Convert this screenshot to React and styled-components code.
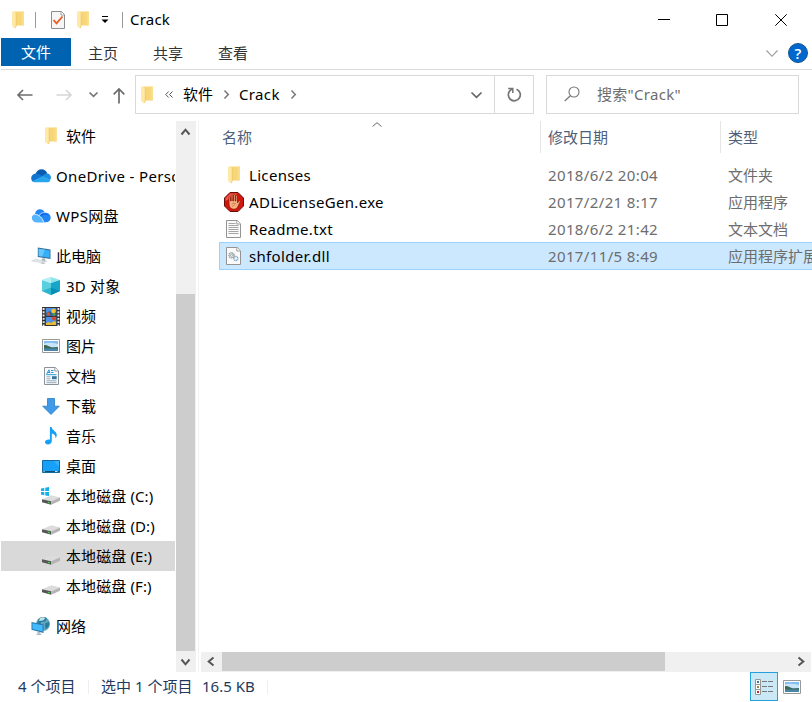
import React from "react";
import styled, { createGlobalStyle } from "styled-components";

const Global = createGlobalStyle`
  * { box-sizing: border-box; }
  html, body { margin: 0; background: #fff; overflow: hidden; }
`;

const Window = styled.div`
  width: 812px;
  height: 702px;
  display: flex;
  flex-direction: column;
  background: #fff;
  color: #000;
  font: 15px/20px "Noto Sans", "Noto Sans CJK SC", sans-serif;
  white-space: nowrap;
  overflow: hidden;
`;

const Svg = styled.svg`
  display: block;
  flex: none;
  overflow: visible;
`;

const Text = styled.span`
  letter-spacing: ${(p) => p.$ls || 0}px;
`;

/* ---------- title bar ---------- */
const TitleBar = styled.header`
  height: 38px;
  flex: none;
  display: flex;
  align-items: center;
  padding: 1px 25px 0 12px;
`;
const Title = styled.span`
  letter-spacing: 0.2px;
  margin-top: -2px;
`;
const TitleSeparator = styled.i`
  width: 1px;
  height: 16px;
  background: #999;
  margin: 0 ${(p) => p.$right}px 0 ${(p) => p.$left}px;
`;
const WindowControls = styled.div`
  display: flex;
  margin-left: auto;
`;
const WindowButton = styled.div`
  margin-left: ${(p) => p.$before}px;
`;
const QuickItem = styled.div`
  margin-right: ${(p) => p.$after}px;
`;

/* ---------- ribbon ---------- */
const Ribbon = styled.nav`
  height: 32px;
  flex: none;
  display: flex;
  align-items: flex-start;
  margin-left: 1px;
  padding-right: 4px;
  border-bottom: 1px solid #dadbdc;
`;
const FileTab = styled.div`
  width: 70px;
  height: 28px;
  background: #0063b1;
  color: #fff;
  text-align: center;
  line-height: 29px;
`;
const Tab = styled.div`
  width: 65px;
  line-height: 30px;
  text-align: center;
  color: #333;
  text-indent: -1px;
`;
const RibbonEnd = styled.div`
  display: flex;
  align-items: center;
  gap: 10px;
  height: 30px;
  margin-left: auto;
`;

/* ---------- address row ---------- */
const AddressRow = styled.div`
  height: 51px;
  flex: none;
  display: flex;
  padding: 5px 13px 0 17px;
`;
const NavButtons = styled.div`
  width: 118px;
  height: 39px;
  display: flex;
  align-items: center;
`;
const NavButton = styled.div`
  margin-right: ${(p) => p.$after}px;
`;
const AddressBox = styled.div`
  width: 399px;
  height: 39px;
  border: 1px solid #d9d9d9;
  display: flex;
  align-items: center;
  padding-left: 5px;
`;
const CrumbOverflow = styled.div`
  margin: 0 0 0 12px;
`;
const Crumb = styled.span`
  margin: 0 11px 0 10px;
  line-height: 36px;
  height: 37px;
  letter-spacing: ${(p) => p.$ls || 0}px;
`;
const AddressDrop = styled.div`
  margin: 0 12px 0 auto;
`;
const Refresh = styled.div`
  width: 39px;
  height: 37px;
  border-left: 1px solid #d9d9d9;
  display: flex;
  align-items: center;
  justify-content: center;
`;
const SearchBox = styled.div`
  width: 253px;
  height: 39px;
  margin-left: 12px;
  border: 1px solid #d9d9d9;
  display: flex;
  align-items: center;
  gap: 17px;
  padding: 0 0 2px 17px;
  color: #6d6d6d;
`;

/* ---------- body ---------- */
const Body = styled.div`
  height: 551px;
  flex: none;
  display: flex;
`;
const Sidebar = styled.aside`
  width: 176px;
  padding: 0 1px 0 1px;
`;
const TreeRow = styled.div`
  height: 30px;
  display: flex;
  align-items: center;
  overflow: hidden;
  margin-top: ${(p) => p.$gap || 0}px;
  padding-left: ${(p) => (p.$level === 2 ? 40 : 30)}px;
  background: ${(p) => (p.$selected ? "#d9d9d9" : "transparent")};
`;
const TreeIcon = styled.span`
  width: 20px;
  flex: none;
  display: flex;
  justify-content: center;
  margin-right: 5px;
`;
const VScroll = styled.div`
  width: 20px;
  display: flex;
  flex-direction: column;
  background: #f0f0f0;
`;
const ScrollButton = styled.div`
  width: ${(p) => p.$w}px;
  height: ${(p) => p.$h}px;
  flex: none;
  display: flex;
  align-items: center;
  justify-content: center;
`;
const VThumb = styled.div`
  width: 19px;
  height: 357px;
  margin-top: 152px;
  background: #cdcdcd;
`;
const Splitter = styled.div`
  width: 5px;
  border-left: 1px solid #f2f2f2;
  margin-left: 2px;
  margin-right: -2px;
`;
const Main = styled.main`
  flex: 1;
  min-width: 0;
  display: flex;
  flex-direction: column;
`;
const HeaderRow = styled.div`
  height: 32px;
  display: grid;
  grid-template-columns: 339px 180px 1fr;
  color: #4c607a;
`;
const HeaderCell = styled.div`
  position: relative;
  padding: 6px 0 0 ${(p) => (p.$first ? 21 : 7)}px;
  border-left: ${(p) => (p.$first ? 0 : 1)}px solid #e5e5e5;
`;
const SortMark = styled.span`
  position: absolute;
  left: 171px;
  top: 1px;
`;
const FileList = styled.div`
  flex: 1;
  padding: 8px 0 0 18px;
  overflow: hidden;
`;
const FileRow = styled.div`
  height: ${(p) => (p.$selected ? 28 : 27)}px;
  display: grid;
  grid-template-columns: 321px 180px 1fr;
  align-items: center;
  color: #6d6d6d;
  background: ${(p) => (p.$selected ? "#cce8ff" : "transparent")};
  border: 1px solid ${(p) => (p.$selected ? "#99d1ff" : "transparent")};
  border-right: 0;
`;
const FileName = styled.div`
  display: flex;
  align-items: center;
  color: #000;
  padding-left: 4px;
`;
const FileIcon = styled.span`
  width: 20px;
  display: flex;
  justify-content: center;
  margin-right: 5px;
`;
const Cell = styled.div`
  padding-left: 7px;
  overflow: hidden;
  letter-spacing: ${(p) => p.$ls || 0}px;
`;
const HScroll = styled.div`
  height: 20px;
  display: flex;
  align-items: stretch;
  background: #f0f0f0;
  margin: 0 1px 0 0;
`;
const HThumb = styled.div`
  width: 443px;
  height: 19px;
  background: #cdcdcd;
  margin-right: auto;
`;

/* ---------- status bar ---------- */
const StatusBar = styled.footer`
  height: 29px;
  flex: none;
  display: flex;
  align-items: center;
  padding: 0 11px 0 18px;
  color: #1e395b;
`;
const StatusItem = styled.span`
  width: ${(p) => p.$w}px;
  padding-bottom: 2px;
`;
const StatusLine = styled.i`
  width: 1px;
  height: 14px;
  background: #eee;
  margin-right: 12px;
`;
const ViewButtons = styled.div`
  margin-left: auto;
  display: flex;
  align-items: center;
  gap: 5px;
`;
const ViewToggle = styled.div`
  width: 28px;
  height: 29px;
  border: 1px solid #26a0da;
  background: #cbe8f6;
  display: flex;
  align-items: center;
  justify-content: center;
`;

/* ---------- icons ---------- */
const Folder = () => (
  <Svg width="12" height="18" viewBox="0 0 12 18">
    <path d="M2 .5h9.5v14H2z" fill="#f7d67a" />
    <path d="M9.5.5h2.3v14H9.5z" fill="#fbdc86" />
    <path d="M0 .5h2L4 2.5v13l-1 2L0 15z" fill="#ffe9a6" />
    <path d="M4.2 2.8v12.4l-1 2" stroke="#edc45f" strokeWidth=".7" fill="none" />
  </Svg>
);

const Chevron = ({ dir = "down", w = 10, h = 6, color = "#666", sw = 1.5 }) => {
  const d = {
    down: `M.5 .5L${w / 2} ${h - 0.7}L${w - 0.5} .5`,
    up: `M.5 ${h - 0.5}L${w / 2} .7L${w - 0.5} ${h - 0.5}`,
    right: `M.5 .5L${w - 0.7} ${h / 2}L.5 ${h - 0.5}`,
    left: `M${w - 0.5} .5L.7 ${h / 2}L${w - 0.5} ${h - 0.5}`,
  }[dir];
  return (
    <Svg width={w} height={h} viewBox={`0 0 ${w} ${h}`}>
      <path d={d} stroke={color} strokeWidth={sw} fill="none" />
    </Svg>
  );
};

const PropertiesIcon = () => (
  <Svg width="14" height="18" viewBox="0 0 14 18">
    <path d="M.5.5h10l3 3v14H.5z" fill="#f6f6f6" stroke="#8d8d8d" />
    <path d="M10 .5V4h3.5" fill="#fff" stroke="#8d8d8d" strokeWidth=".8" />
    <path d="M2.5 9l3 3.3L11.5 5.5" fill="none" stroke="#ec5a1c" strokeWidth="1.8" />
  </Svg>
);

const QuickMenu = () => (
  <Svg width="8" height="7" viewBox="0 0 8 7">
    <path d="M1 .5h6" stroke="#000" />
    <path d="M.5 3.5h7L4 7z" fill="#000" />
  </Svg>
);

const Minimize = () => (
  <Svg width="12" height="12" viewBox="0 0 12 12"><path d="M0 5.5h12" stroke="#000" /></Svg>
);
const Maximize = () => (
  <Svg width="12" height="12" viewBox="0 0 12 12"><path d="M.5.5h11v11H.5z" stroke="#000" fill="none" /></Svg>
);
const Close = () => (
  <Svg width="12" height="12" viewBox="0 0 12 12"><path d="M.3.3l11.4 11.4M11.7.3L.3 11.7" stroke="#000" /></Svg>
);

const HelpBadge = styled.div`
  width: 20px;
  height: 20px;
  border-radius: 50%;
  background: #0068cc;
  border: 1px solid #17568f;
  color: #fff;
  text-align: center;
  font: 600 15px/18px "Open Sans", sans-serif;
`;

const Arrow = ({ dir, color }) => (
  <Svg width="16" height="12" viewBox="0 0 16 12">
    <path
      d={dir === "left" ? "M15.5 6H1M6 1L1 6l5 5" : "M.5 6H15M10 1l5 5-5 5"}
      stroke={color}
      strokeWidth="1.6"
      fill="none"
    />
  </Svg>
);
const UpArrow = () => (
  <Svg width="12" height="16" viewBox="0 0 12 16">
    <path d="M6 16.5V2M.7 7.3L6 2l5.3 5.3" stroke="#6c6c6c" strokeWidth="1.7" fill="none" />
  </Svg>
);
const DoubleLeft = () => (
  <Svg width="8" height="7" viewBox="0 0 8 7">
    <path d="M3.7.5l-3 3 3 3M7.5.5l-3 3 3 3" stroke="#555" strokeWidth="1" fill="none" />
  </Svg>
);
const RefreshIcon = () => (
  <Svg width="14" height="15" viewBox="0 0 14 15">
    <path d="M9.5 2.2A6 6 0 1 1 3.2 3.4L5.2 1.8" stroke="#757575" strokeWidth="1.7" fill="none" />
    <path d="M1.2 1.5H5.8V6" stroke="#757575" strokeWidth="1.5" fill="none" />
  </Svg>
);
const SearchIcon = () => (
  <Svg width="16" height="16" viewBox="0 0 16 16">
    <circle cx="10" cy="6" r="5" stroke="#767676" strokeWidth="1.1" fill="none" />
    <path d="M6.4 9.7L.7 15" stroke="#767676" strokeWidth="1.2" />
  </Svg>
);

const OneDrive = () => (
  <Svg width="20" height="14" viewBox="0 0 20 14">
    <path d="M4.5 5C5.5 2 7.8.3 10.5.3c2.8 0 5 1.6 5.8 4.3L11 9z" fill="#0a5cb0" />
    <path d="M4.8 4.4C7 4.2 9 5.5 12 7.4L3 13.1C-1 12-1 5 4.8 4.4z" fill="#1174cf" />
    <path d="M15 4.6c3.2-.3 5 1.8 5 4.3l-1 2-8-4z" fill="#1b8fe0" />
    <path d="M1.5 12L11.7 7.1l7.8 3.9c-.6 1.4-1.7 2.3-3.5 2.3H4.5c-1.3 0-2.3-.5-3-1.3z" fill="#29a5ec" />
  </Svg>
);
const WpsCloud = () => (
  <Svg width="19" height="14" viewBox="0 0 19 14">
    <path d="M3 5C3.5 2 5.3.3 8 .3c2.4 0 4.3 1.5 4.8 3.6 3.5-.4 5.9 2 5.9 4.8 0 2.6-2 4.6-4.8 4.6H4.8C2 13.3.2 11.3.2 8.9.2 7 1.2 5.6 3 5z" fill="#2386f5" />
    <path d="M3 5.2c3.8-.4 6.6 1.5 9.5 8.1H4.8C2 13.3.2 11.3.2 8.9.2 7 1.2 5.6 3 5.2z" fill="#55b5ff" />
    <path d="M1 5.7c4.2-1 8.2 1.2 10.7 7.4M7.5 6.1c1-1.8 2.8-2.5 5.2-2.2" fill="none" stroke="#d9efff" strokeWidth=".9" />
    <path d="M8 6.3c2-3 6.8-2.6 9 .2-2.5-1.2-5.6-1-8 .8z" fill="#1267e8" />
  </Svg>
);
const ThisPc = () => (
  <Svg width="20" height="18" viewBox="0 0 20 18">
    <path d="M6.8.6l12.7 2v9.3L6.8 10z" fill="#33709e" />
    <path d="M7.7 1.8l11 1.7v7.2l-11-1.6z" fill="#35aff5" />
    <path d="M7.7 1.8l6.2 1-2.8 6.7-3.4-.5z" fill="#67c7fa" />
    <path d="M11.5 11.2l2.5.4.3 1.8 2.4 1-4 .2-2.6-1z" fill="#a8b5bd" />
    <path d="M.5 14l4-1.9 8.5 1.9-3.5 1.6z" fill="#e0e5e8" stroke="#c3cace" strokeWidth=".4" />
    <path d="M9 16l3-1 3 1-3 1.2z" fill="#bfc7cc" />
  </Svg>
);
const Cube = () => (
  <Svg width="18" height="18" viewBox="0 0 18 18">
    <path d="M9 0l9 3-9 3-9-3z" fill="#8ee5ef" />
    <path d="M0 3l9 3v12l-9-4z" fill="#5ccfdf" />
    <path d="M18 3L9 6v12l9-4z" fill="#18a5ca" />
    <path d="M0 14l9-3.5V18z" fill="#2bb5ce" />
    <path d="M9 10.5l9 3.5-9 4z" fill="#078fb8" />
    <path d="M0 3l9-3v6z" fill="#b5f0f5" />
  </Svg>
);
const Film = () => (
  <Svg width="18" height="19" viewBox="0 0 18 19">
    <path d="M0 0h18v19H0z" fill="#333" />
    <path d="M3.8 1h10.5v7.7H3.8zM3.8 10h10.5v8H3.8z" fill="#4d91e6" />
    <path d="M4 6l4-2 3 3 3-2v3.7H4z" fill="#34608a" />
    <circle cx="11.5" cy="4" r="2.2" fill="#f2c32d" />
    <circle cx="6.3" cy="7" r="1.7" fill="#dc5437" />
    <circle cx="12" cy="7.3" r="1.3" fill="#55a245" />
    <circle cx="12" cy="11.5" r="2" fill="#d9432e" />
    <path d="M4 18v-2l3-1 2 1 3-2 2 1v3z" fill="#e6bb31" />
    <path d="M1.6 1v18M16.4 1v18" stroke="#e9e9e9" strokeWidth="1.9" strokeDasharray="1.9 1.4" />
  </Svg>
);
const Picture = () => (
  <Svg width="18" height="14" viewBox="0 0 18 14">
    <path d="M.5.5h17v13H.5z" fill="#fff" stroke="#989898" />
    <path d="M2 2h14v10H2z" fill="#84bdf3" />
    <path d="M2 4.5Q7 2.8 16 5v3H2z" fill="#c8e4f9" />
    <path d="M2 6.2c3-.5 5 1.5 8 2.2l6-.5v2H2z" fill="#3c6a55" />
    <path d="M2 9.5h14V12H2z" fill="#4b86a9" />
  </Svg>
);
const Docs = () => (
  <Svg width="15" height="18" viewBox="0 0 15 18">
    <path d="M.5.5h10.7l3.3 3.3v13.7H.5z" fill="#fbfbfb" stroke="#89929a" />
    <path d="M10.8.7V4h3.5" stroke="#89929a" strokeWidth=".9" fill="#fff" />
    <path d="M2.5 7.3L5 2.8l.8 3.5M3 5.5h3M7 3.5h2.5M7 5.5h2.5M2.3 7.7h10.2" stroke="#279ad5" fill="none" />
    <path d="M2.5 9.8h4M2.5 11.8h4M2.5 13.8h10M2.5 15.7h10" stroke="#8ba2b2" strokeWidth=".9" />
    <path d="M8 9.2h4.7v3H8z" fill="#35749d" />
  </Svg>
);
const Download = () => (
  <Svg width="18" height="17" viewBox="0 0 18 17">
    <path d="M5.5.5h7v7.7h4.8L9 16.5.7 8.2h4.8z" fill="#3f9ae9" stroke="#297bc2" strokeWidth=".8" />
  </Svg>
);
const Music = () => (
  <Svg width="13" height="18" viewBox="0 0 13 18">
    <path d="M4.9 0h1.8c.3 3.7 5.1 4 5.1 8.1 0 1.2-.5 2.4-1.3 3.5.4-3-1-4.7-3.7-5.2V14c0 2-1.8 3.5-3.9 3.5C1.2 17.5 0 16.5 0 15.1c0-1.8 2.5-3.1 4.9-2.4z" fill="#16a0f3" />
  </Svg>
);
const Desktop = () => (
  <Svg width="18" height="13" viewBox="0 0 18 13">
    <path d="M.5.5h17v12H.5z" fill="#17a0f7" stroke="#14699f" />
    <path d="M1 11.5h16" stroke="#174d72" />
    <path d="M1.5 11.5h1.2M13 11.5h2.5" stroke="#fff" strokeWidth=".8" />
    <path d="M12 1h5v6z" fill="#38b1fc" />
  </Svg>
);
const Drive = ({ windows }) => (
  <Svg width="20" height="18" viewBox="0 0 20 18">
    {windows && (
      <path d="M0 1.5l3.3-.6v3H0zM4.3.7L8 0v3.9H4.3zM0 5h3.3v3.2L0 7.6zM4.3 5H8v4l-3.7-.6z" fill="#12afe8" />
    )}
    <path d="M1 12.2l9.5-4 8.5 2.3-8.8 3.7z" fill="#dcdcdc" />
    <path d="M1 12.2l9.2 2v3.6L1 15.2z" fill="#565656" />
    <path d="M10.2 14.2l8.8-3.7v3.2l-8.8 4.1z" fill="#b4b4b4" />
    <path d="M7 14.8l1.8.4v1.3L7 16z" fill="#39df3a" />
  </Svg>
);
const Network = () => (
  <Svg width="20" height="20" viewBox="0 0 20 20">
    <circle cx="12" cy="8" r="7" fill="#5fa5bf" />
    <path d="M7.5 3.5C10 .5 14 .5 16 2.500l-2 3-4 .5-1 4-3-1zM14 7.500l4-1.500c.8 3-1 6-3.500 7z" fill="#297a9c" />
    <path d="M9 2c2-1 4-1 5.500 0L12 4.500 8 5z" fill="#c2e4e9" />
    <path d="M.5 6l12 2.500v8.400L.5 13.700z" fill="#2776a7" />
    <path d="M1.400 7.200l10.200 2.100v6.300L1.400 13z" fill="#43baff" />
    <path d="M6 15.500l3.400.8.2 1.600 2 .6-4 .8-3-.8 2-.8z" fill="#b3bfc5" />
  </Svg>
);
const StopHand = () => (
  <Svg width="20" height="20" viewBox="0 0 20 20">
    <path d="M6 .5h8L19.5 6v8L14 19.5H6L.5 14V6z" fill="#d3160b" stroke="#69100c" />
    <path d="M6.5 1.5h7L11 4 4 7.5 1.5 9V6.3z" fill="#f15b4b" />
    <path d="M5 11V5.5c0-1 1.5-1 1.5 0V9h.7V3.6c0-1 1.6-1 1.6 0V9h.7V3c0-1 1.7-1 1.7 0v6h.7V4c0-1 1.6-1 1.6 0v7l1.4-2c.8-.8 1.8 0 1.3.9L13.6 15c-.7 1.4-1.7 2.2-3.7 2.2-3.3 0-4.9-2.4-4.9-6.2z" fill="#f8b184" stroke="#8e1d0e" strokeWidth=".8" />
    <path d="M7.5 12c2-1.2 3.5-1 5 .2M8 14.5l3-2" stroke="#bd633d" strokeWidth=".7" fill="none" />
  </Svg>
);
const Page = ({ children }) => (
  <Svg width="16" height="18" viewBox="0 0 16 18">
    <path d="M.5.5h10.7l3.3 3.3v13.7H.5z" fill="#fafafa" stroke="#949494" />
    <path d="M10.8.7V4h3.5" stroke="#949494" strokeWidth=".9" fill="#fff" />
    {children}
  </Svg>
);
const TextFile = () => (
  <Page>
    <path d="M2.5 3.5h7M2.5 5.5h10M2.5 7.5h10M2.5 9.5h10M2.5 11.5h10M2.5 13.5h10" stroke="#9b9b9b" strokeWidth=".9" />
  </Page>
);
const DllFile = () => (
  <Page>
    <circle cx="5.5" cy="8.3" r="2.6" fill="#e8e8e8" stroke="#8d979c" strokeWidth="1.3" strokeDasharray="1.3 .5" />
    <circle cx="5.5" cy="8.3" r="1" fill="#fff" stroke="#8d979c" strokeWidth=".7" />
    <circle cx="9.8" cy="11.5" r="2.1" fill="#dceaf4" stroke="#779fbd" strokeWidth="1.2" strokeDasharray="1.2 .5" />
    <circle cx="9.8" cy="11.5" r=".7" fill="#fff" />
  </Page>
);
const DetailsIcon = () => (
  <Svg width="18" height="16" viewBox="0 0 18 16">
    <path d="M.5.5h5v15h-5zM.5 5.5h5M.5 10.5h5" fill="#fff" stroke="#969696" />
    <path d="M2 2h2v2H2z" fill="#40768d" />
    <path d="M2 7h2v2H2z" fill="#a28042" />
    <path d="M2 12h2v2H2z" fill="#b8322a" />
    <path d="M7 2.5h5M13 2.5h5M7 7.5h5M13 7.5h5M7 12.5h5M13 12.5h5" stroke="#777" />
  </Svg>
);

/* ---------- data ---------- */
const tree = [
  { label: "软件", icon: <Folder />, level: 2 },
  { label: "OneDrive - Personal", icon: <OneDrive />, gap: 10, ls: 0.35 },
  { label: "WPS网盘", icon: <WpsCloud />, gap: 10, ls: 0.3 },
  { label: "此电脑", icon: <ThisPc />, gap: 10 },
  { label: "3D 对象", icon: <Cube />, level: 2, ls: 0.2 },
  { label: "视频", icon: <Film />, level: 2 },
  { label: "图片", icon: <Picture />, level: 2 },
  { label: "文档", icon: <Docs />, level: 2 },
  { label: "下载", icon: <Download />, level: 2 },
  { label: "音乐", icon: <Music />, level: 2 },
  { label: "桌面", icon: <Desktop />, level: 2 },
  { label: "本地磁盘 (C:)", icon: <Drive windows />, level: 2, ls: 0.1 },
  { label: "本地磁盘 (D:)", icon: <Drive />, level: 2, ls: 0.1 },
  { label: "本地磁盘 (E:)", icon: <Drive />, level: 2, selected: true, ls: 0.1 },
  { label: "本地磁盘 (F:)", icon: <Drive />, level: 2, ls: 0.1 },
  { label: "网络", icon: <Network />, gap: 10 },
];

const files = [
  { name: "Licenses", icon: <Folder />, date: "2018/6/2 20:04", type: "文件夹" },
  { name: "ADLicenseGen.exe", icon: <StopHand />, date: "2017/2/21 8:17", type: "应用程序" },
  { name: "Readme.txt", icon: <TextFile />, date: "2018/6/2 21:42", type: "文本文档" },
  { name: "shfolder.dll", icon: <DllFile />, date: "2017/11/5 8:49", type: "应用程序扩展", selected: true },
];

export default function App() {
  return (
    <Window>
      <Global />
      <TitleBar>
        <Folder />
        <TitleSeparator $left={11} $right={15} />
        <QuickItem $after={12}><PropertiesIcon /></QuickItem>
        <QuickItem $after={12}><Folder /></QuickItem>
        <QuickMenu />
        <TitleSeparator $left={13} $right={7} />
        <Title>Crack</Title>
        <WindowControls>
          <WindowButton $before={0}><Minimize /></WindowButton>
          <WindowButton $before={46}><Maximize /></WindowButton>
          <WindowButton $before={47}><Close /></WindowButton>
        </WindowControls>
      </TitleBar>
      <Ribbon>
        <FileTab>文件</FileTab>
        <Tab>主页</Tab>
        <Tab>共享</Tab>
        <Tab>查看</Tab>
        <RibbonEnd>
          <Chevron w={12} h={7} color="#999" sw={1.1} />
          <HelpBadge>?</HelpBadge>
        </RibbonEnd>
      </Ribbon>
      <AddressRow>
        <NavButtons>
          <NavButton $after={23}><Arrow dir="left" color="#6c6c6c" /></NavButton>
          <NavButton $after={17}><Arrow dir="right" color="#d6d6d6" /></NavButton>
          <NavButton $after={15}><Chevron w={9} h={5} color="#777" sw={1.7} /></NavButton>
          <UpArrow />
        </NavButtons>
        <AddressBox>
          <Folder />
          <CrumbOverflow><DoubleLeft /></CrumbOverflow>
          <Crumb>软件</Crumb>
          <Chevron dir="right" w={5} h={9} color="#777" />
          <Crumb $ls={0.35}>Crack</Crumb>
          <Chevron dir="right" w={5} h={9} color="#777" />
          <AddressDrop><Chevron w={11} h={6} color="#666" sw={1.7} /></AddressDrop>
          <Refresh><RefreshIcon /></Refresh>
        </AddressBox>
        <SearchBox>
          <SearchIcon />
          <Text $ls={0.3}>搜索"Crack"</Text>
        </SearchBox>
      </AddressRow>
      <Body>
        <Sidebar>
          {tree.map((t) => (
            <TreeRow key={t.label} $level={t.level} $gap={t.gap} $selected={t.selected}>
              <TreeIcon>{t.icon}</TreeIcon>
              <Text $ls={t.ls}>{t.label}</Text>
            </TreeRow>
          ))}
        </Sidebar>
        <VScroll>
          <ScrollButton $w={19} $h={21}><Chevron dir="up" w={9} h={6} color="#555" sw={2} /></ScrollButton>
          <VThumb />
          <ScrollButton $w={19} $h={21}><Chevron w={9} h={6} color="#555" sw={2} /></ScrollButton>
        </VScroll>
        <Splitter />
        <Main>
          <HeaderRow>
            <HeaderCell $first>
              名称
              <SortMark><Chevron dir="up" w={10} h={5} color="#666" sw={1} /></SortMark>
            </HeaderCell>
            <HeaderCell>修改日期</HeaderCell>
            <HeaderCell>类型</HeaderCell>
          </HeaderRow>
          <FileList>
            {files.map((f) => (
              <FileRow key={f.name} $selected={f.selected}>
                <FileName>
                  <FileIcon>{f.icon}</FileIcon>
                  <Text $ls={0.32}>{f.name}</Text>
                </FileName>
                <Cell $ls={0.37}>{f.date}</Cell>
                <Cell>{f.type}</Cell>
              </FileRow>
            ))}
          </FileList>
          <HScroll>
            <ScrollButton $w={20} $h={19}><Chevron dir="left" w={6} h={9} color="#555" sw={2} /></ScrollButton>
            <ScrollButton $w={1} $h={19} />
            <HThumb />
            <ScrollButton $w={21} $h={19}><Chevron dir="right" w={6} h={9} color="#555" sw={2} /></ScrollButton>
          </HScroll>
        </Main>
      </Body>
      <StatusBar>
        <StatusItem $w={70}>4 个项目</StatusItem>
        <StatusLine />
        <StatusItem $w={101}>选中 1 个项目</StatusItem>
        <StatusItem $w={65}>16.5 KB</StatusItem>
        <StatusLine />
        <ViewButtons>
          <ViewToggle><DetailsIcon /></ViewToggle>
          <Picture />
        </ViewButtons>
      </StatusBar>
    </Window>
  );
}
